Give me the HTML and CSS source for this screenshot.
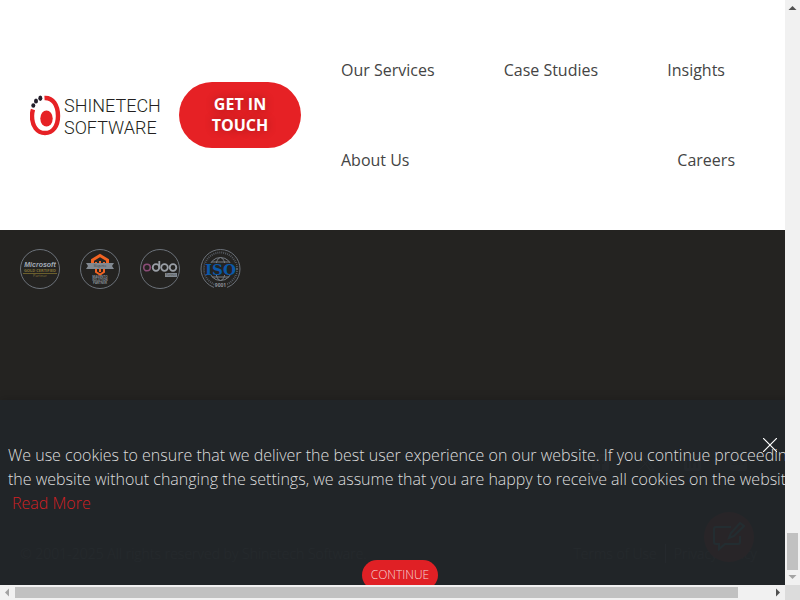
FILE: index.html
```html
<!DOCTYPE html>
<html lang="en">
<head>
    <meta charset="UTF-8">
    <meta name="viewport" content="width=device-width, initial-scale=1.0">
    <title>Shinetech Software</title>
    <link rel="stylesheet" href="styles.css">
</head>
<body>
    <div class="view">
        <header class="header">
            <a class="logo" href="#" aria-label="Shinetech Software">
                <svg width="130" height="42" viewBox="0 0 130 42">
                    <path d="M14.500 4C23 3.500 28 11 28 22C28 32 23 39 15 39C7 39 2 32 2 22Q2 18.500 3 15.500" fill="none" stroke="#e62125" stroke-width="4.400"/>
                    <ellipse cx="16.500" cy="24.500" rx="6.200" ry="8" fill="#e62125"/>
                    <g fill="#231f2b">
                        <ellipse cx="3.300" cy="11.500" rx="2" ry="2.200"/>
                        <ellipse cx="6" cy="7" rx="2" ry="2.500"/>
                        <ellipse cx="10.300" cy="4.200" rx="2" ry="2.700"/>
                    </g>
                    <text class="logo-text" x="34" y="18">SHINETECH</text>
                    <text class="logo-text" x="34" y="40">SOFTWARE</text>
                </svg>
            </a>
            <button class="touch">GET IN TOUCH</button>
            <nav class="nav">
                <a href="#">Our Services</a>
                <a href="#">Case Studies</a>
                <a href="#">Insights</a>
                <a href="#">About Us</a>
                <a href="#">Careers</a>
            </nav>
        </header>

        <footer class="footer">
            <div class="badges">
                <svg width="41" height="41" viewBox="0 0 41 41">
                    <circle class="ring" cx="20" cy="20" r="19.500"/>
                    <text x="20" y="18" class="ms">Microsoft</text>
                    <text x="20" y="23" class="gold">GOLD CERTIFIED</text>
                    <path d="M3 24.500h34" stroke="#6b5f2c" stroke-width="1"/>
                    <text x="20" y="28" class="partner">Partner</text>
                </svg>
                <svg width="41" height="41" viewBox="0 0 41 41">
                    <circle class="ring" cx="20" cy="20" r="19.500"/>
                    <path d="M12.500 20V11L20 6.500 27.500 11v9" fill="none" stroke="#f26322" stroke-width="3"/>
                    <path d="M16 13v10l4 2.500 4-2.500V13M20 12v11" fill="none" stroke="#f26322" stroke-width="2"/>
                    <path d="M6 14h28l-2 3 2 3H6l2-3z" fill="#828991"/>
                    <text x="20" y="18" class="ribbon">Magento</text>
                    <text x="20" y="29" class="tiny">MAGENTO</text>
                    <text x="20" y="32" class="tiny">SOLUTION</text>
                    <text x="20" y="35" class="tiny">PARTNER</text>
                </svg>
                <svg width="41" height="41" viewBox="0 0 41 41">
                    <circle class="ring" cx="20" cy="20" r="19.500"/>
                    <circle cx="7" cy="18.500" r="3.300" fill="none" stroke="#8a4c76" stroke-width="1.600"/>
                    <g fill="none" stroke="#9a9fa6" stroke-width="1.800">
                        <circle cx="16" cy="18.500" r="3.300"/>
                        <path d="M19.300 12v7"/>
                        <circle cx="24.500" cy="18.500" r="3.300"/>
                        <circle cx="33" cy="18.500" r="3.300"/>
                    </g>
                    <path d="M25 24h12v4H25z" fill="#828991"/>
                    <text x="31" y="27" class="odoo">Partner</text>
                </svg>
                <svg width="41" height="41" viewBox="0 0 41 41">
                    <circle class="ring" cx="20.500" cy="20" r="19.500"/>
                    <circle cx="20.500" cy="20" r="16.500" fill="none" stroke="#555a61" stroke-width="2" stroke-dasharray="1 1"/>
                    <g fill="none" stroke="#747a82">
                        <circle cx="20.500" cy="20" r="11.500"/>
                        <ellipse cx="20.500" cy="20" rx="5" ry="11.500"/>
                        <path d="M12 13h17M12 28h17"/>
                    </g>
                    <path d="M5 14h31v12H5z" fill="#242321"/>
                    <text x="20.500" y="26" class="iso">ISO</text>
                    <path d="M14 34h13v6H14z" fill="#242321"/>
                    <text x="20.500" y="38" class="nine">9001</text>
                </svg>
            </div>
            <div class="footer-bottom">
                <div class="social">
                    <svg width="17" height="17" viewBox="0 0 17 17"><rect width="17" height="17" rx="2" fill="#667"/><path d="M9 17V6q0-3 4-3M6 9h6" fill="none" stroke="#232220" stroke-width="2"/></svg>
                    <svg width="17" height="17" viewBox="0 0 17 17"><path d="M1 1h4l11 15h-4zM16 1L1 16" fill="none" stroke="#889" stroke-width="1"/></svg>
                    <svg width="17" height="17" viewBox="0 0 17 17"><rect width="17" height="17" rx="2" fill="#667"/><path d="M4 7v7M4 3v2M8 14V7M8 10q4-5 5 0v4" fill="none" stroke="#232220" stroke-width="2"/></svg>
                    <svg width="17" height="17" viewBox="0 0 17 17"><rect width="17" height="17" rx="2" fill="#667"/><text x="8.500" y="11" class="dev">DEV</text></svg>
                </div>
                <div class="legal">
                    <span>© 2001-2025 All rights reserved by Shinetech Software.</span>
                    <span class="terms"><a href="#">Terms of Use</a><a href="#">Privacy Policy</a></span>
                </div>
            </div>
        </footer>

        <button class="chat" aria-label="Contact us">
            <svg width="32" height="32" viewBox="0 0 32 32" fill="none" stroke="#4ae0f0" stroke-width="2">
                <path d="M18 6H3q-2 0-2 2v13q0 2 2 2h3v5l6-5h13q2 0 2-2v-6"/>
                <path d="M16 17l2-5L27 2l4 3-10 10z"/>
            </svg>
        </button>

        <div class="cookies">
            <button class="close" aria-label="Close">
                <svg width="14" height="14" viewBox="0 0 14 14"><path d="M0 0l14 14M14 0L0 14" stroke="#fff" stroke-width="1.200"/></svg>
            </button>
            <p>We use cookies to ensure that we deliver the best user experience on our website. If you continue proceeding<br>the website without changing the settings, we assume that you are happy to receive all cookies on the website.<br><a href="#">Read More</a></p>
            <button class="continue">CONTINUE</button>
        </div>
    </div>

    <div class="bar bar-y">
        <svg width="15" height="15" viewBox="0 0 15 15"><path d="M3.500 10L7.500 6l4 4z" fill="#505050"/></svg>
        <span class="thumb"></span>
        <svg width="15" height="15" viewBox="0 0 15 15"><path d="M3.500 5l4 4 4-4z" fill="#a3a3a3"/></svg>
    </div>
    <div class="bar bar-x">
        <svg width="15" height="15" viewBox="0 0 15 15"><path d="M9 3.500L5 7.500l4 4z" fill="#a3a3a3"/></svg>
        <span class="thumb"></span>
        <svg width="15" height="15" viewBox="0 0 15 15"><path d="M6 3.500l4 4-4 4z" fill="#505050"/></svg>
    </div>
    <div class="corner"></div>
</body>
</html>
```

FILE: styles.css
```css
* {
    box-sizing: border-box;
}
body {
    margin: 0;
    height: 100vh;
    display: grid;
    grid-template-columns: 1fr 15px;
    grid-template-rows: 1fr 15px;
    overflow: hidden;
    font-family: "Open Sans", sans-serif;
    font-size: 16px;
    line-height: 24px;
    color: #444;
}
a {
    color: inherit;
    text-decoration: none;
}
button {
    border: 0;
    padding: 0;
    font-family: inherit;
    cursor: pointer;
}
svg {
    display: block;
}
.view {
    position: relative;
    display: flex;
    flex-direction: column;
    min-width: 0;
    min-height: 0;
    overflow: hidden;
}

/* header */
.header {
    display: flex;
    align-items: center;
    gap: 20px;
    padding: 25px 30px;
    background: #fff;
    box-shadow: 0 0 10px rgba(0,0,0,0.3);
}
.logo {
    width: 129px;
    flex-shrink: 0;
}
.logo-text {
    font-family: Roboto, sans-serif;
    font-size: 18px;
    font-weight: 300;
    fill: #231f20;
}
.touch {
    width: 122px;
    flex-shrink: 0;
    padding: 12px 30px;
    border-radius: 33px;
    background: #e62125;
    color: #fff;
    font-size: 16px;
    font-weight: 700;
    line-height: 21px;
    text-shadow: 0 0 10px rgba(0,0,0,0.3);
}
.nav {
    flex: 1;
    display: flex;
    flex-wrap: wrap;
    justify-content: space-between;
}
.nav a {
    padding: 0 20px;
    margin-right: 10px;
    line-height: 90px;
}
.nav a:last-child {
    margin-right: 0;
}

/* footer */
.footer {
    flex: 1;
    display: flex;
    flex-direction: column;
    justify-content: space-between;
    padding: 19px 20px;
    background: #242321;
}
.badges {
    display: flex;
    gap: 19px;
}
.badges text {
    text-anchor: middle;
    font-size: 3px;
    fill: #8a9098;
}
.ring {
    fill: none;
    stroke: #6c727a;
    stroke-width: 1;
}
.badges .ms {
    font-family: "Liberation Sans", sans-serif;
    font-size: 7px;
    font-weight: 700;
    font-style: italic;
    fill: #a3acb8;
}
.badges .gold {
    font-size: 4px;
    font-weight: 700;
    fill: #85753a;
}
.badges .partner {
    font-size: 4px;
    fill: #85753a;
}
.badges .tiny {
    font-weight: 700;
}
.badges .ribbon,
.badges .odoo {
    fill: #444;
}
.badges .iso {
    font-family: "DejaVu Serif", serif;
    font-size: 15px;
    font-weight: 700;
    fill: #0b58a8;
}
.badges .nine {
    font-size: 5px;
    font-weight: 700;
}
.footer-bottom {
    color: #7c858d;
    font-size: 14px;
    font-weight: 300;
}
.social {
    display: flex;
    justify-content: flex-end;
    gap: 29px;
    padding: 0 18px 71px 0;
}
.dev {
    font-size: 7px;
    font-weight: 700;
    text-anchor: middle;
    fill: #232220;
}
.legal {
    display: flex;
    justify-content: space-between;
}
.terms a {
    padding: 0 8px;
}
.terms a + a {
    border-left: 1px solid #7c858d;
}

/* overlays */
.chat {
    position: absolute;
    right: 31px;
    bottom: 23px;
    width: 50px;
    height: 50px;
    border-radius: 50%;
    background: #c62125;
    display: flex;
    align-items: center;
    justify-content: center;
}
.cookies {
    position: absolute;
    left: 0;
    bottom: 0;
    width: 100vw;
    height: 185px;
    padding: 43px 8px 0;
    background: rgba(33,37,41,0.96);
    box-shadow: 0 0 10px rgba(0,0,0,0.2);
    color: #dedede;
    font-weight: 300;
    text-align: center;
}
.cookies p {
    margin: 0 0 45px;
    text-align: left;
    white-space: nowrap;
}
.cookies p a {
    margin-left: 4px;
    color: #d02024;
}
.close {
    position: absolute;
    top: 38px;
    right: 23px;
    background: none;
}
.continue {
    height: 30px;
    padding: 0 9px;
    border-radius: 15px;
    background: #e02025;
    color: #f3d5d6;
    font-size: 12px;
    font-weight: 300;
    line-height: 30px;
}

/* scroll bars */
.bar {
    display: flex;
    align-items: center;
    background: #f1f1f1;
}
.bar-y {
    flex-direction: column;
}
.thumb {
    background: #c1c1c1;
}
.bar-y .thumb {
    width: 11px;
    height: 37px;
    margin-top: auto;
}
.bar-x .thumb {
    flex: 0 1 723px;
    height: 11px;
    margin-right: auto;
}
.corner {
    background: #dcdcdc;
}
```
